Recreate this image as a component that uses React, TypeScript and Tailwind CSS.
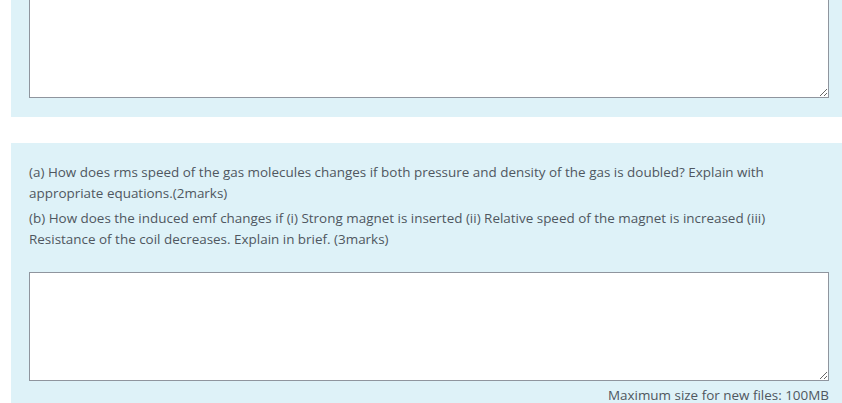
import React from "react";

const font = { fontFamily: '"Open Sans", "Noto Sans", sans-serif' };

export default function App() {
    return (
        <div className="w-[842px] h-[403px] overflow-hidden bg-white text-[#4f5760]" style={font}>
            {/* previous answer box, cut off at the top */}
            <div className="ml-[11px] bg-[#def2f8] pl-[18px] pr-[13px] pb-[19px]">
                <textarea className="block w-full h-[98px] bg-white border border-t-0 border-[#8f959e] rounded-none outline-none" />
            </div>

            <div className="h-[26px]" />

            <div className="ml-[11px] bg-[#def2f8] pl-[18px] pr-[13px] pt-[19px]">
                <div className="text-[13.45px] leading-[21px]">
                    <p className="mb-[4px]">
                        (a) How does rms speed of the gas molecules changes if both pressure and density of the gas is doubled? Explain with appropriate equations.(2marks)
                    </p>
                    <p>
                        (b) How does the induced emf changes if (i) Strong magnet is inserted (ii) Relative speed of the magnet is increased (iii) Resistance of the coil decreases. Explain in brief. (3marks)
                    </p>
                </div>
                <textarea className="block w-full h-[109px] mt-[22px] bg-white border border-[#8f959e] rounded-none outline-none" />
                <div className="text-right text-[13.45px] leading-[20px] mt-[4px]">
                    Maximum size for new files: 100MB
                </div>
            </div>
        </div>
    );
}
